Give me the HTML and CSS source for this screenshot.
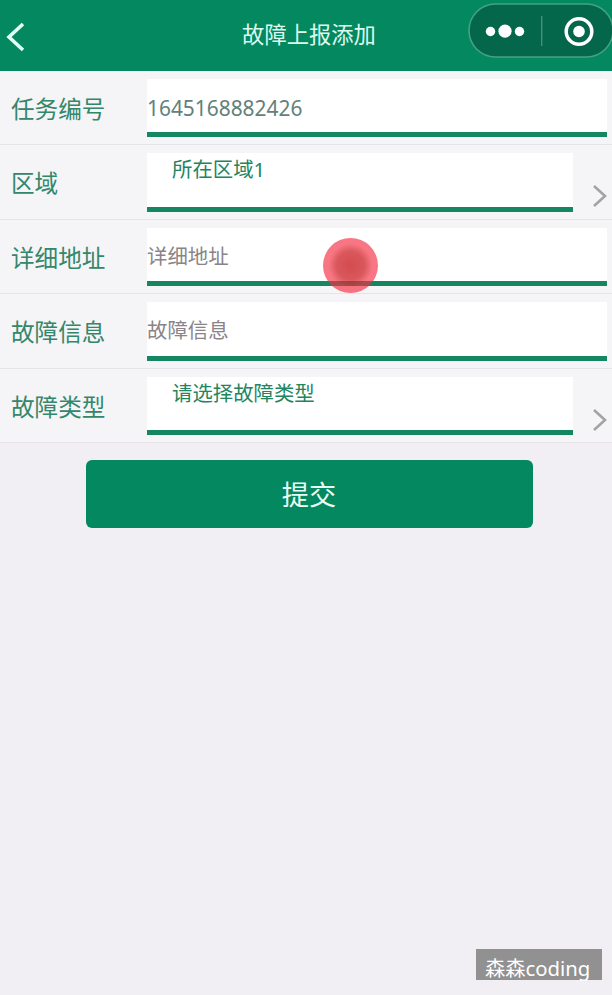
FILE: index.html
```
<!DOCTYPE html>
<html lang="zh-CN">
<head>
<meta charset="utf-8">
<title>故障上报添加</title>
<link rel="stylesheet" href="styles.css">
</head>
<body>
<header class="navbar">
  <svg class="back" width="20" height="30" viewBox="0 0 20 30"><path d="M17 2 3 15 17 28" fill="none" stroke="#e6fff5" stroke-width="3.6"/></svg>
  <h1 class="title">故障上报添加</h1>
  <div class="capsule">
    <svg width="146" height="56" viewBox="0 0 146 56">
      <rect x="1" y="1" width="144" height="53" rx="26.5" fill="#04674b" stroke="#43a283" stroke-width="1.6"/>
      <g fill="#fff"><circle cx="22.5" cy="28.5" r="4.7"/><circle cx="37" cy="28.2" r="6.6"/><circle cx="51.5" cy="28.5" r="4.7"/><circle cx="111" cy="28.5" r="5.8"/></g>
      <path d="M73.7 13v30" stroke="#43917a" stroke-width="1.4"/>
      <circle cx="111" cy="28.5" r="12.8" fill="none" stroke="#fff" stroke-width="3.5"/>
    </svg>
  </div>
</header>
<main class="page">
  <form class="form">
    <div class="row"><span class="label">任务编号</span><div class="field value">1645168882426</div></div>
    <div class="row"><span class="label">区域</span><div class="field select">所在区域1</div><svg class="arrow" width="16" height="24" viewBox="0 0 16 24"><path d="M2 2 13 12 2 22" fill="none" stroke="#a3a3a6" stroke-width="2.6"/></svg></div>
    <div class="row"><span class="label">详细地址</span><div class="field hint">详细地址</div></div>
    <div class="row"><span class="label">故障信息</span><div class="field hint">故障信息</div></div>
    <div class="row"><span class="label">故障类型</span><div class="field select">请选择故障类型</div><svg class="arrow" width="16" height="24" viewBox="0 0 16 24"><path d="M2 2 13 12 2 22" fill="none" stroke="#a3a3a6" stroke-width="2.6"/></svg></div>
  </form>
  <button class="submit" type="button">提交</button>
</main>
<div class="touch"></div>
<div class="watermark">森森coding</div>
</body>
</html>
```
FILE: styles.css
```
* { box-sizing: border-box; }

body {
  margin: 0;
  height: 995px;
  position: relative;
  overflow: hidden;
  background: #f1eff3;
  font-family: "Noto Sans", "Noto Sans CJK SC", sans-serif;
}

.navbar {
  height: 71px;
  display: grid;
  grid-template-columns: 150px 1fr 150px;
  background: #048860;
}

.back { margin: 22px 0 0 6px; }

.title {
  margin: 0;
  padding-left: 6px;
  line-height: 69px;
  text-align: center;
  font-size: 22.3px;
  font-weight: 400;
  color: #dcfaee;
}

.capsule { padding: 3px 0 0 6px; }

.capsule svg { display: block; }

.form { background: #f5f4f7; }

.row {
  height: 74.4px;
  display: flex;
  padding: 8px 5px 7px 11px;
  border-bottom: 1px solid #e6e4e7;
}

.label {
  width: 136px;
  flex: none;
  line-height: 60px;
  font-size: 23.6px;
  color: #33876a;
}

.field {
  flex: 1;
  height: 58.4px;
  border-bottom: 5px solid #148760;
  background: #fff;
  font-size: 20.4px;
  line-height: 55px;
  white-space: nowrap;
}

.value {
  line-height: 58px;
  font-size: 20.9px;
  color: #64807a;
}

.hint {
  line-height: 56px;
  color: #8a8488;
}

.select {
  padding-left: 25px;
  line-height: 32px;
  color: #22855f;
}

.arrow {
  flex: none;
  margin: 31px -1px 0 19px;
}

.submit {
  display: block;
  width: 447px;
  height: 68px;
  margin: 17.5px 0 0 85.5px;
  padding: 2px 0 0;
  border: 0;
  border-radius: 6px;
  background: #048860;
  color: #e8fdf5;
  font: 27.2px/66px "Noto Sans", "Noto Sans CJK SC", sans-serif;
}

.touch {
  position: absolute;
  left: 323px;
  top: 238px;
  width: 55px;
  height: 55px;
  border-radius: 50%;
  background: radial-gradient(circle, rgba(200, 30, 35, .8) 0, rgba(205, 35, 40, .76) 14px, rgba(245, 45, 65, .65) 22px);
}

.watermark {
  position: absolute;
  right: 10px;
  bottom: 15px;
  width: 126px;
  height: 31px;
  padding-left: 9px;
  background: #919191;
  color: #fff;
  font-size: 20.3px;
  line-height: 39px;
  white-space: nowrap;
}
```
